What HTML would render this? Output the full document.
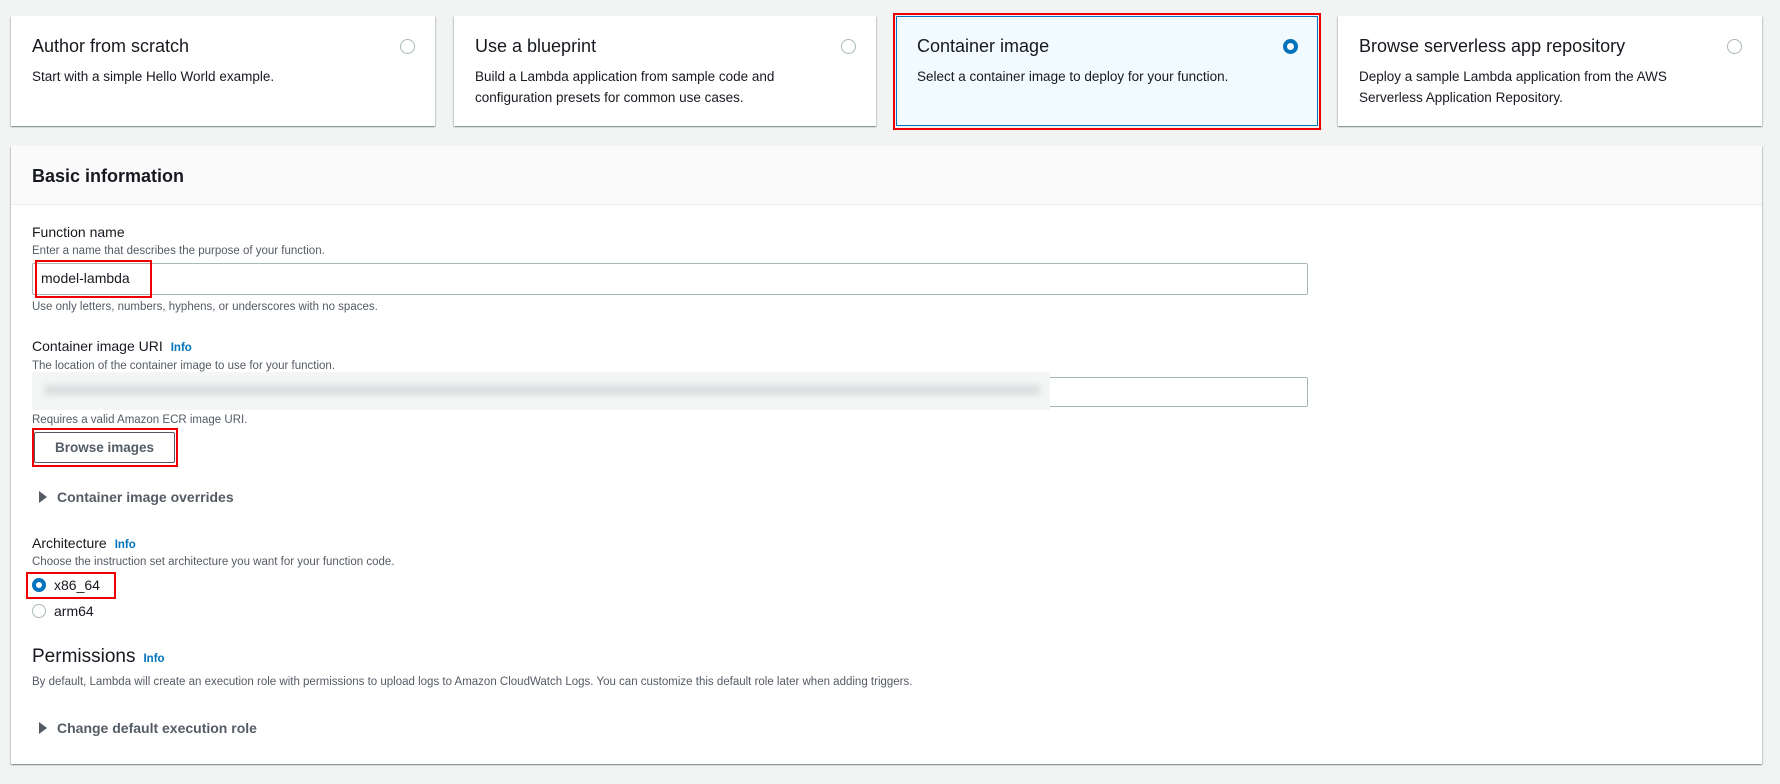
<!DOCTYPE html>
<html><head><meta charset="utf-8"><style>
*{box-sizing:border-box;margin:0;padding:0}
body{width:1780px;height:784px;background:#f2f3f3;font-family:"Liberation Sans",sans-serif;color:#16191f;position:relative;overflow:hidden}
.a{position:absolute}
.card{position:absolute;top:16px;height:110px;background:#fff;box-shadow:0 1px 1px rgba(0,28,36,.3),1px 1px 1px rgba(0,28,36,.15),-1px 1px 1px rgba(0,28,36,.15)}
.card .t{position:absolute;left:21px;top:20px;font-size:18px;white-space:nowrap}
.card .d{position:absolute;left:21px;top:51px;font-size:13.5px;line-height:20.5px;width:335px}
.card .r{position:absolute;right:20px;top:23px;width:15px;height:15px;border:1.5px solid #aab7b8;border-radius:50%}
.sel{background:#f1faff;border:1px solid #0073bb;box-shadow:none}
.sel .r{border:4px solid #0073bb;background:#fff}
.red{position:absolute;border:2px solid #e00;}
.lbl{position:absolute;left:32px;font-size:14px}
.desc{position:absolute;left:32px;font-size:11.5px;color:#545b64}
.info{color:#0073bb;font-weight:bold;font-size:11.5px;margin-left:8px}
.inp{position:absolute;left:32px;width:1276px;border:1px solid #aab7b8;border-radius:2px;background:#fff}
.tri{position:absolute;left:39px;width:0;height:0;border-left:8px solid #545b64;border-top:6px solid transparent;border-bottom:6px solid transparent}
.exp{position:absolute;left:57px;font-size:14px;font-weight:bold;color:#545b64}
</style></head><body>
<div class="card" style="left:11px;width:424px"><div class="t">Author from scratch</div><div class="d">Start with a simple Hello World example.</div><div class="r"></div></div>
<div class="card" style="left:454px;width:422px"><div class="t">Use a blueprint</div><div class="d">Build a Lambda application from sample code and configuration presets for common use cases.</div><div class="r"></div></div>
<div class="card sel" style="left:896px;width:422px"><div class="t" style="left:20px;top:19px">Container image</div><div class="d" style="left:20px;top:50px;width:380px">Select a container image to deploy for your function.</div><div class="r" style="right:19px;top:22px"></div></div>
<div class="red" style="left:893px;top:13px;width:428px;height:117px"></div>
<div class="card" style="left:1338px;width:424px"><div class="t">Browse serverless app repository</div><div class="d">Deploy a sample Lambda application from the AWS Serverless Application Repository.</div><div class="r"></div></div>

<div class="a" style="left:11px;top:146px;width:1751px;height:618px;background:#fff;box-shadow:0 1px 1px rgba(0,28,36,.3),1px 1px 1px rgba(0,28,36,.15),-1px 1px 1px rgba(0,28,36,.15)">
<div class="a" style="left:0;top:0;width:100%;height:59px;background:#fafafa;border-bottom:1px solid #eaeded"></div>
</div>
<div class="a" style="left:32px;top:166px;font-size:18px;font-weight:bold">Basic information</div>

<div class="lbl" style="top:224px">Function name</div>
<div class="desc" style="top:245px">Enter a name that describes the purpose of your function.</div>
<div class="inp" style="top:263px;height:32px"></div>
<div class="a" style="left:41px;top:270px;font-size:14px">model-lambda</div>
<div class="red" style="left:35px;top:260px;width:117px;height:38px"></div>
<div class="desc" style="top:301px">Use only letters, numbers, hyphens, or underscores with no spaces.</div>

<div class="lbl" style="top:338px">Container image URI<span class="info">Info</span></div>
<div class="desc" style="top:360px">The location of the container image to use for your function.</div>
<div class="inp" style="top:377px;height:30px"></div>
<div class="a" style="left:32px;top:372px;width:1018px;height:38px;background:#f4f5f5"></div>
<div class="a" style="left:45px;top:385px;width:995px;height:10px;background:#dcdedf;filter:blur(3px)"></div>
<div class="desc" style="top:414px">Requires a valid Amazon ECR image URI.</div>
<div class="a" style="left:34px;top:432px;width:141px;height:31px;border:1px solid #545b64;border-radius:2px;background:#fff;font-size:13.5px;font-weight:bold;color:#545b64;text-align:center;line-height:29px">Browse images</div>
<div class="red" style="left:32px;top:428px;width:146px;height:39px"></div>

<div class="tri" style="top:491px"></div><div class="exp" style="top:489px">Container image overrides</div>

<div class="lbl" style="top:535px">Architecture<span class="info">Info</span></div>
<div class="desc" style="top:556px">Choose the instruction set architecture you want for your function code.</div>
<div class="a" style="left:32px;top:578px;width:14px;height:14px;border-radius:50%;border:4px solid #0073bb;background:#fff"></div>
<div class="a" style="left:54px;top:577px;font-size:14px">x86_64</div>
<div class="red" style="left:26px;top:572px;width:90px;height:27px"></div>
<div class="a" style="left:32px;top:604px;width:14px;height:14px;border-radius:50%;border:1.5px solid #aab7b8"></div>
<div class="a" style="left:54px;top:603px;font-size:14px">arm64</div>

<div class="a" style="left:32px;top:646px;font-size:19px">Permissions<span class="info" style="font-size:11.5px">Info</span></div>
<div class="desc" style="top:676px">By default, Lambda will create an execution role with permissions to upload logs to Amazon CloudWatch Logs. You can customize this default role later when adding triggers.</div>
<div class="tri" style="top:722px"></div><div class="exp" style="top:720px">Change default execution role</div>
</body></html>
